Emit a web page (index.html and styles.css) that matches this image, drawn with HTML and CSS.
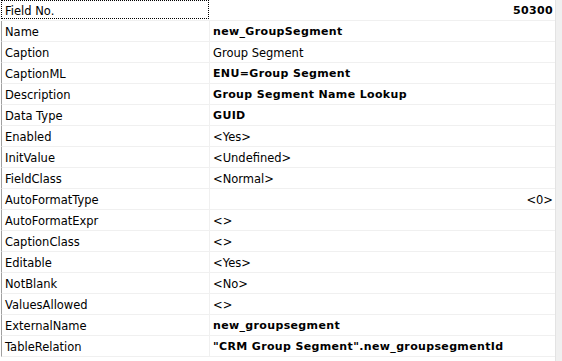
FILE: index.html
```html
<!DOCTYPE html>
<html>
<head>
<meta charset="utf-8">
<link rel="stylesheet" href="styles.css">
</head>
<body>
<div class="frame">
  <div class="sheet">
    <div class="row head">
      <div class="label"><span class="focus">Field No.</span></div>
      <div class="value right b">50300</div>
    </div>
    <div class="row"><div class="label">Name</div><div class="value b">new_GroupSegment</div></div>
    <div class="row"><div class="label">Caption</div><div class="value">Group Segment</div></div>
    <div class="row"><div class="label">CaptionML</div><div class="value b">ENU=Group Segment</div></div>
    <div class="row"><div class="label">Description</div><div class="value b">Group Segment Name Lookup</div></div>
    <div class="row"><div class="label">Data Type</div><div class="value b">GUID</div></div>
    <div class="row"><div class="label">Enabled</div><div class="value">&lt;Yes&gt;</div></div>
    <div class="row"><div class="label">InitValue</div><div class="value">&lt;Undefined&gt;</div></div>
    <div class="row"><div class="label">FieldClass</div><div class="value">&lt;Normal&gt;</div></div>
    <div class="row"><div class="label">AutoFormatType</div><div class="value right">&lt;0&gt;</div></div>
    <div class="row"><div class="label">AutoFormatExpr</div><div class="value">&lt;&gt;</div></div>
    <div class="row"><div class="label">CaptionClass</div><div class="value">&lt;&gt;</div></div>
    <div class="row"><div class="label">Editable</div><div class="value">&lt;Yes&gt;</div></div>
    <div class="row"><div class="label">NotBlank</div><div class="value">&lt;No&gt;</div></div>
    <div class="row"><div class="label">ValuesAllowed</div><div class="value">&lt;&gt;</div></div>
    <div class="row"><div class="label">ExternalName</div><div class="value b">new_groupsegment</div></div>
    <div class="row"><div class="label">TableRelation</div><div class="value b">"CRM Group Segment".new_groupsegmentId</div></div>
  </div>
  <div class="scroll"></div>
</div>
</body>
</html>
```
FILE: styles.css
```css
html, body {
  margin: 0;
  padding: 0;
  background: #fff;
}
body {
  font-family: "DejaVu Sans", Verdana, sans-serif;
  font-size: 11.5px;
  color: #000;
  width: 562px;
  height: 361px;
  overflow: hidden;
}
.frame {
  display: flex;
  height: 361px;
}
.sheet {
  width: 556px;
  border-right: 1px solid #e3e3e3;
  padding-left: 1px;
  box-sizing: border-box;
}
.scroll {
  flex: 1;
  background: #f0f0f0;
}
.row {
  display: grid;
  grid-template-columns: 208px 1fr;
  height: 21px;
  border-bottom: 1px solid #f0f0f0;
  border-left: 1px solid #a0a0a0;
  box-sizing: border-box;
}
.row.head {
  border-left-color: transparent;
}
.label {
  padding: 2px 0 0 3px;
  line-height: 18px;
  border-right: 1px solid #f0f0f0;
  white-space: nowrap;
}
.head .label {
  border-right-color: transparent;
  padding: 0;
  margin-left: -1px;
}
.focus {
  display: block;
  height: 19px;
  width: 208px;
  box-sizing: border-box;
  border: 1px dotted #000;
  padding: 1px 0 0 3px;
  line-height: 18px;
}
.value {
  padding: 2px 2px 0 3px;
  line-height: 18px;
  white-space: nowrap;
}
.b {
  font-weight: bold;
  font-size: 11px;
  letter-spacing: 0.35px;
}
.right {
  text-align: right;
}
```
